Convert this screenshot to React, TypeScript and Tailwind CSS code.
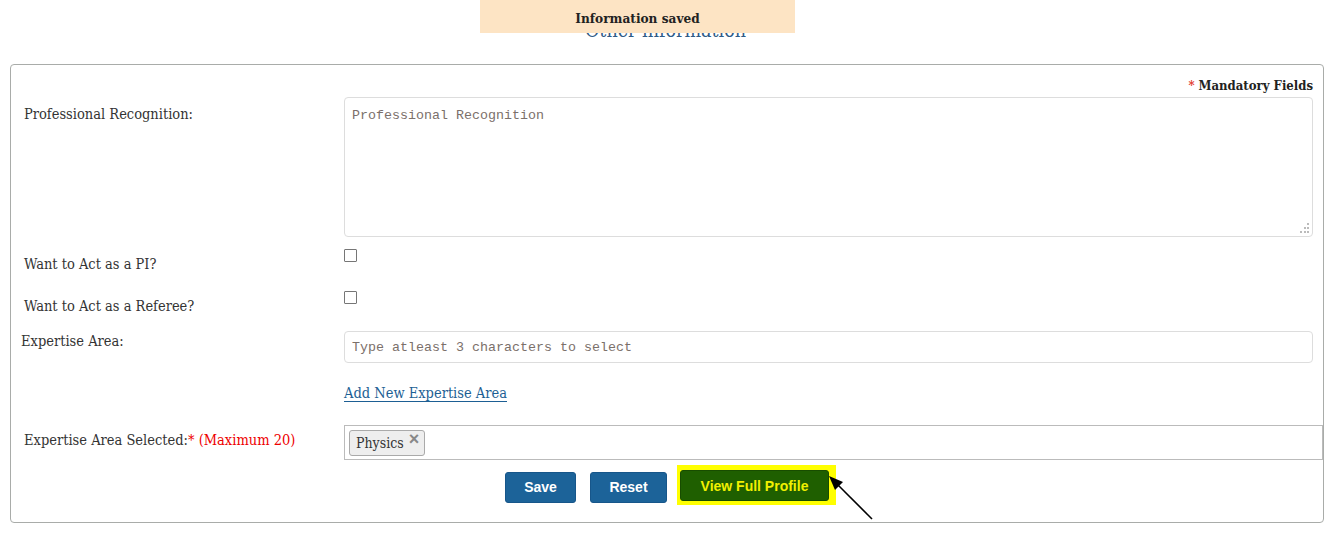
import React, { useState } from 'react';

const serif = { fontFamily: '"DejaVu Serif Condensed", "DejaVu Serif", serif' };
const mono = { fontFamily: '"Liberation Mono", monospace' };

const App: React.FC = () => {
  const [pi, setPi] = useState(false);
  const [referee, setReferee] = useState(false);
  const [tags, setTags] = useState<string[]>(['Physics']);

  return (
    <div className="relative w-[1331px] h-[533px] bg-white text-[#333] text-[14.5px]" style={serif}>
      {/* heading sits behind the toast */}
      <div className="h-[64px] pt-[18px] text-center text-[19.5px] leading-[26px] text-[#2f5b86]">Other information</div>

      <div className="absolute left-[480px] top-0 w-[315px] h-[33px] bg-[#fde4c4] flex items-center justify-center pt-[3px] font-bold text-[13.5px] text-[#222]">
        Information saved
      </div>

      <div className="ml-[10px] w-[1314px] h-[459px] border border-[#a9aca9] rounded-[4px] pl-[13px] pr-[10px] pt-[11px]">
        <div className="h-[20px] leading-[20px] text-right font-bold text-[13px] text-[#222]">
          <span className="text-[#e23b2e]">* </span>Mandatory Fields
        </div>

        <div className="flex mt-[1px]">
          <div className="w-[320px] pt-[7px] leading-[20px]">Professional Recognition:</div>
          <div className="relative flex-1 flex">
            <textarea
              placeholder="Professional Recognition"
              className="flex-1 h-[140px] resize-none border border-[#ddd] rounded-[4px] px-[7px] pt-[10px] text-[13.33px] leading-[16px] outline-none placeholder:text-[#7b706a]"
              style={mono}
            />
            <svg className="absolute right-[3px] bottom-[3px]" width="10" height="11">
              <rect x="7" y="0" width="2" height="2" fill="#bbb" />
              <rect x="4" y="4" width="2" height="2" fill="#bbb" />
              <rect x="7" y="4" width="2" height="2" fill="#bbb" />
              <rect x="0" y="8" width="2" height="2" fill="#bbb" />
              <rect x="4" y="8" width="2" height="2" fill="#bbb" />
              <rect x="7" y="8" width="2" height="2" fill="#bbb" />
            </svg>
          </div>
        </div>

        <div className="flex mt-[12px] h-[42px]">
          <div className="w-[320px] pt-[5px] leading-[20px]">Want to Act as a PI?</div>
          <input type="checkbox" checked={pi} onChange={() => setPi(!pi)} className="w-[13px] h-[13px] m-0 appearance-none border border-[#767676] rounded-[1px] bg-white" />
        </div>

        <div className="flex h-[40px]">
          <div className="w-[320px] pt-[5px] leading-[20px]">Want to Act as a Referee?</div>
          <input type="checkbox" checked={referee} onChange={() => setReferee(!referee)} className="w-[13px] h-[13px] m-0 appearance-none border border-[#767676] rounded-[1px] bg-white" />
        </div>

        <div className="flex">
          <div className="w-[323px] -ml-[3px] leading-[20px]">Expertise Area:</div>
          <input
            placeholder="Type atleast 3 characters to select"
            className="flex-1 h-[32px] border border-[#ddd] rounded-[4px] px-[7px] text-[13.33px] outline-none placeholder:text-[#7b706a]"
            style={mono}
          />
        </div>

        <div className="mt-[20px] ml-[320px] leading-[20px]">
          <a href="#" className="text-[#1d5f94] underline underline-offset-[3px]">Add New Expertise Area</a>
        </div>

        <div className="flex mt-[22px]">
          <div className="w-[320px] pt-[5px] leading-[20px]">
            Expertise Area Selected:<span className="text-[#e00]">* (Maximum 20)</span>
          </div>
          <div className="flex-1 -mr-[10px] h-[35px] border border-[#bbb] flex items-center pl-[4px]">
            {tags.map(t => (
              <span key={t} className="h-[26px] flex items-center gap-[5px] bg-[#eee] border border-[#aaa] rounded-[3px] pl-[6px] pr-[5px] text-[14px] text-[#333]">
                <span className="pt-[2px]">{t}</span>
                <button onClick={() => setTags(tags.filter(x => x !== t))} className="text-[#888] font-bold text-[18px] leading-none -mt-[8px]" style={{ fontFamily: '"Liberation Sans", sans-serif' }}>×</button>
              </span>
            ))}
          </div>
        </div>

        <div className="flex items-center mt-[5px] ml-[481px]" style={{ fontFamily: '"Liberation Sans", Arial, sans-serif' }}>
          <button className="mt-[5px] w-[71px] h-[31px] bg-[#1c6399] border border-[#17568a] rounded-[3px] text-white font-bold text-[14px]">Save</button>
          <button className="mt-[5px] ml-[14px] w-[77px] h-[31px] bg-[#1c6399] border border-[#17568a] rounded-[3px] text-white font-bold text-[14px]">Reset</button>
          <div className="ml-[10px] bg-[#ffff00] pl-[3px] pr-[7px] pt-[5px] pb-[4px]">
            <button className="w-[149px] h-[31px] pt-[2px] bg-[#1f5f00] border border-[#184d00] rounded-[3px] text-[#f0f000] font-bold text-[14px]">View Full Profile</button>
          </div>
        </div>
      </div>

      <svg className="absolute left-0 top-0 pointer-events-none" width="1331" height="533">
        <line x1="872" y1="519" x2="836" y2="483" stroke="#000" strokeWidth="1.6" />
        <polygon points="829,476 843,482 835,490" fill="#000" />
      </svg>
    </div>
  );
};

export default App;
